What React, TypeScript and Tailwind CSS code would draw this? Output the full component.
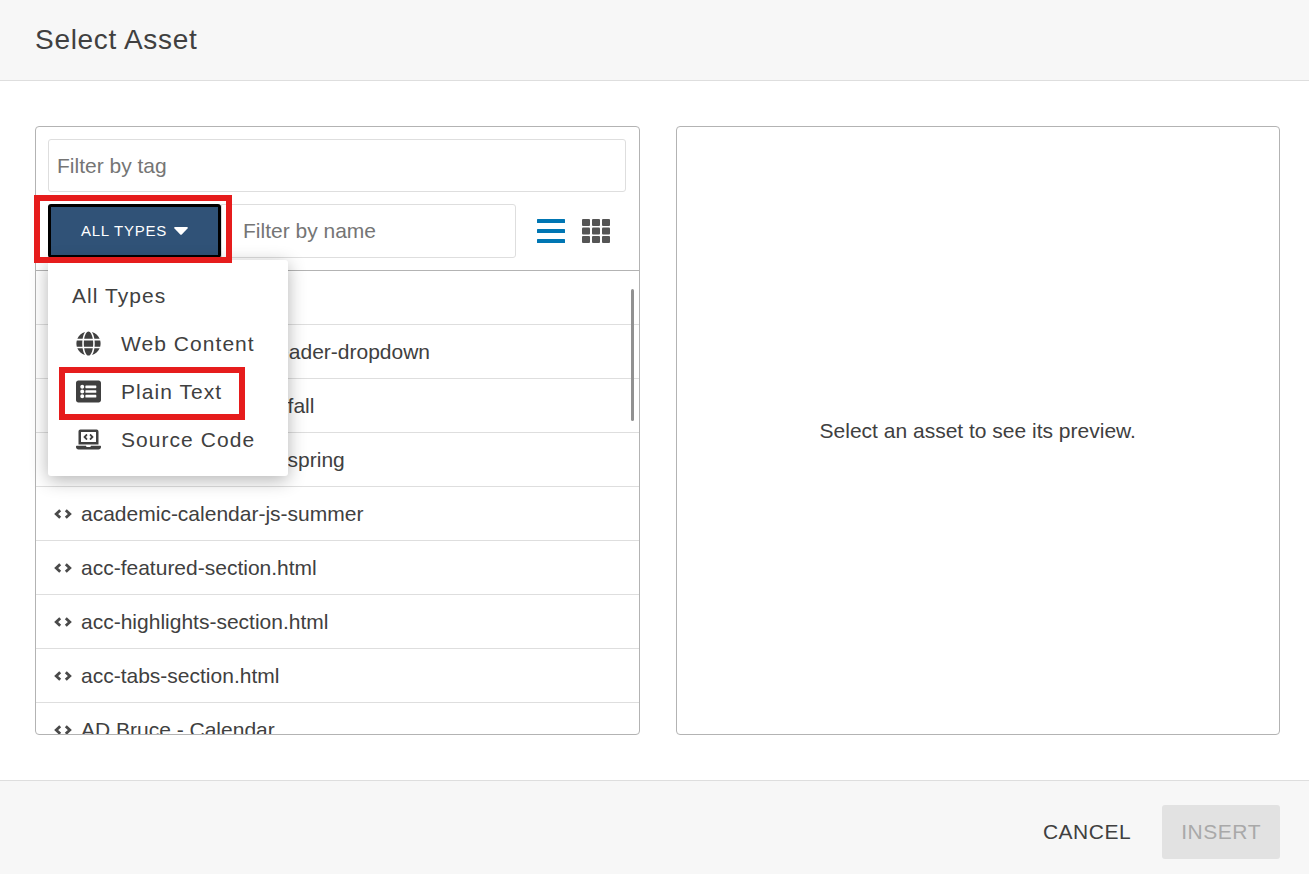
import React, { useState } from 'react';
import { FaGlobe, FaLaptopCode, FaListAlt } from 'react-icons/fa';

const assetTypes = [
  { id: 'web', label: 'Web Content', icon: FaGlobe },
  { id: 'text', label: 'Plain Text', icon: FaListAlt, highlighted: true },
  { id: 'code', label: 'Source Code', icon: FaLaptopCode },
];

const assets = [
  'academic',
  'academic-calendar-header-dropdown',
  'academic-calendar-js-fall',
  'academic-calendar-js-spring',
  'academic-calendar-js-summer',
  'acc-featured-section.html',
  'acc-highlights-section.html',
  'acc-tabs-section.html',
  'AD Bruce - Calendar',
];

const CodeIcon = () => (
  <svg viewBox="0 0 18 10" className="h-[10px] w-[18px] shrink-0" fill="none" stroke="#4a4a4a" strokeWidth="2.8">
    <path d="M6.2 1.2 L2.2 5 L6.2 8.8" />
    <path d="M11.8 1.2 L15.8 5 L11.8 8.8" />
  </svg>
);

const ListViewIcon = () => (
  <svg viewBox="0 0 28 24" className="h-6 w-7" fill="#0076b3">
    <rect x="0" y="0" width="28" height="4" rx="0.5" />
    <rect x="0" y="10" width="28" height="4" rx="0.5" />
    <rect x="0" y="20" width="28" height="4" rx="0.5" />
  </svg>
);

const GridViewIcon = () => (
  <svg viewBox="0 0 28 24" className="h-6 w-7" fill="#555555">
    {[0, 8.5, 17].map((y) =>
      [0, 10, 20].map((x) => <rect key={`${x}-${y}`} x={x} y={y} width="8" height="7" rx="1" />)
    )}
  </svg>
);

const TypeMenu: React.FC<{ onSelect: (label: string) => void }> = ({ onSelect }) => (
  <ul className="absolute left-0 top-14 z-10 w-60 rounded-[3px] bg-white py-3 shadow-[0_4px_18px_rgba(0,0,0,0.3)]">
    <li>
      <button
        type="button"
        onClick={() => onSelect('All Types')}
        className="flex h-12 w-full items-center px-6 text-[21px] tracking-wider"
      >
        All Types
      </button>
    </li>
    {assetTypes.map(({ id, label, icon: Icon, highlighted }) => (
      <li key={id} className="relative">
        <button
          type="button"
          onClick={() => onSelect(label)}
          className="flex h-12 w-full items-center gap-5 px-7 pb-px text-[21px] tracking-wider"
        >
          <Icon className="size-[25px] shrink-0" />
          <span className="whitespace-nowrap">{label}</span>
        </button>
        {highlighted && (
          <span className="pointer-events-none absolute -bottom-1 -top-px left-[11px] right-[43px] border-6 border-[#e61c1c]" />
        )}
      </li>
    ))}
  </ul>
);

const App: React.FC = () => {
  const [type, setType] = useState('All Types');
  const [menuOpen, setMenuOpen] = useState(true);
  const [selected, setSelected] = useState('');

  const selectType = (label: string) => {
    setType(label);
    setMenuOpen(false);
  };

  return (
    <div className="flex h-screen flex-col bg-white font-['Liberation_Sans',Arial,sans-serif] text-[#404040]">
      <header className="flex h-[81px] shrink-0 items-center border-b border-[#dedede] bg-[#f7f7f7] px-[35px]">
        <h1 className="text-[28px] tracking-wide">Select Asset</h1>
      </header>

      <main className="grid min-h-0 flex-1 grid-cols-2 gap-9 py-[45px] pl-[35px] pr-[29px]">
        <section className="flex min-h-0 flex-col rounded-[4px] border border-[#b3b3b3]">
          <div className="flex flex-col gap-3 border-b border-[#b3b3b3] py-3 pl-3 pr-[13px]">
            <input
              type="text"
              aria-label="Filter by tag"
              placeholder="Filter by tag"
              className="h-[53px] w-full rounded-[3px] border border-[#dedede] px-2 text-[21px] placeholder:text-[#757575]"
            />
            <div className="flex items-center">
              <div className="relative shrink-0">
                <button
                  type="button"
                  aria-expanded={menuOpen}
                  onClick={() => setMenuOpen(!menuOpen)}
                  className="flex h-[54px] w-[173px] items-center justify-center gap-[7px] rounded-[3px] border-3 border-black bg-[#305277] text-[15px] uppercase tracking-wider text-white"
                >
                  {type}
                  <svg viewBox="0 0 14 8" className="h-2 w-[14px]" fill="currentColor">
                    <path d="M1 0 H13 Q14.4 0.3 13.5 1.4 L8 7.3 Q7 8.3 6 7.3 L0.5 1.4 Q-0.4 0.3 1 0 Z" />
                  </svg>
                </button>
                {menuOpen && <TypeMenu onSelect={selectType} />}
                <span className="pointer-events-none absolute -bottom-[5px] -left-[14px] -right-[11px] -top-[9px] z-20 border-6 border-[#e61c1c]" />
              </div>
              <input
                type="text"
                aria-label="Filter by name"
                placeholder="Filter by name"
                className="h-[54px] min-w-0 flex-1 rounded-r-[3px] border border-[#dedede] pl-[21px] pr-2 text-[21px] placeholder:text-[#757575]"
              />
              <div className="flex gap-[17px] pl-[21px] pr-4">
                <button type="button" aria-label="List view">
                  <ListViewIcon />
                </button>
                <button type="button" aria-label="Grid view">
                  <GridViewIcon />
                </button>
              </div>
            </div>
          </div>

          <div className="relative min-h-0 flex-1 overflow-hidden">
            <ul>
              {assets.map((name) => (
                <li key={name} className="border-b border-[#dedede]">
                  <button
                    type="button"
                    onClick={() => setSelected(name)}
                    className="flex h-[53px] w-full items-center gap-[9px] px-[18px] text-left text-[21px]"
                  >
                    <CodeIcon />
                    <span>{name}</span>
                  </button>
                </li>
              ))}
            </ul>
            <span className="absolute right-[5px] top-[18px] h-[132px] w-[3px] rounded-full bg-[#919191]" />
          </div>
        </section>

        <section className="flex items-center justify-center rounded-[4px] border border-[#b3b3b3]">
          <p className="text-[21px]">{selected || 'Select an asset to see its preview.'}</p>
        </section>
      </main>

      <footer className="flex shrink-0 items-center justify-end gap-3 border-t border-[#dedede] bg-[#f7f7f7] pb-[15px] pl-[35px] pr-[29px] pt-6">
        <button type="button" className="h-[54px] px-[19px] text-[21px] uppercase tracking-wide">
          Cancel
        </button>
        <button
          type="button"
          disabled
          className="h-[54px] rounded-[3px] bg-[#e2e2e2] px-[19px] text-[21px] uppercase tracking-wide text-[#a9a9a9]"
        >
          Insert
        </button>
      </footer>
    </div>
  );
};

export default App;
